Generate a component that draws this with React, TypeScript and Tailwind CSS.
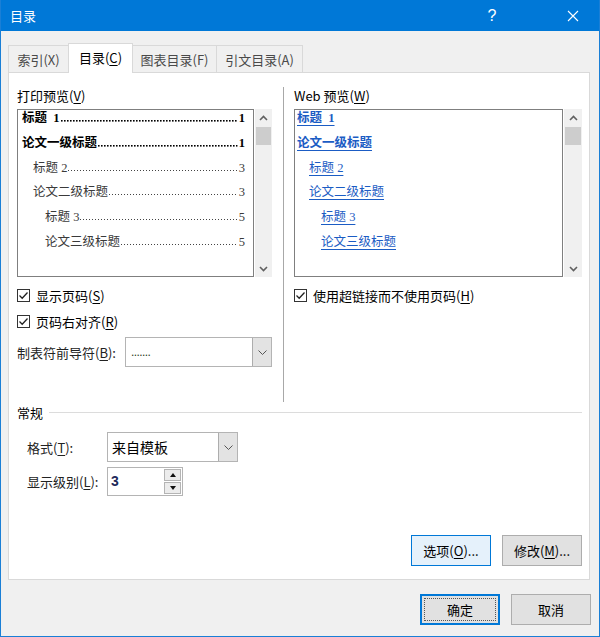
import React from 'react';

const ScrollChevron = ({ up }: { up?: boolean }) => (
  <svg width="9" height="6" viewBox="0 0 9 6">
    <path d={up ? 'M1 5 L4.5 1.5 L8 5' : 'M1 1 L4.5 4.5 L8 1'} fill="none" stroke="#606060" strokeWidth="1.6" />
  </svg>
);

const ComboChevron = () => (
  <svg width="9" height="5" viewBox="0 0 9 5">
    <path d="M0.5 0.5 L4.5 4.5 L8.5 0.5" fill="none" stroke="#555" strokeWidth="1" />
  </svg>
);

const Leader = ({ bold, id }: { bold: boolean; id: string }) => (
  <svg className="flex-1 min-w-0 self-end mb-[4px] mx-[1px]" height="2" preserveAspectRatio="none">
    <defs>
      <pattern id={id} width="3" height="2" patternUnits="userSpaceOnUse">
        <rect x="0" y="0" width={bold ? 1.6 : 1} height={bold ? 1.6 : 1} fill={bold ? '#000' : '#444'} />
      </pattern>
    </defs>
    <rect x="0" y="0" width="100%" height="2" fill={`url(#${id})`} />
  </svg>
);

const Check = ({ label }: { label: React.ReactNode }) => (
  <div className="flex items-center h-[15px]">
    <div className="w-[13px] h-[13px] border border-[#333] bg-white flex items-center justify-center">
      <svg width="11" height="11" viewBox="0 0 11 11">
        <path d="M1.5 5.5 L4.2 8.2 L9.5 2.5" fill="none" stroke="#222" strokeWidth="1.3" />
      </svg>
    </div>
    <span className="ml-[6px] leading-[15px]">{label}</span>
  </div>
);

const Scrollbar = ({ w }: { w: string }) => (
  <div className={`${w} ml-px h-full bg-[#f0f0f0] flex flex-col`}>
    <div className="h-[17px] flex items-center justify-center">
      <ScrollChevron up />
    </div>
    <div className="mt-px h-[18px] mx-px bg-[#cdcdcd]" />
    <div className="flex-1" />
    <div className="h-[17px] flex items-center justify-center">
      <ScrollChevron />
    </div>
  </div>
);

const items = [
  { t: '标题\u00a0\u00a01', n: '1', lvl: 0 },
  { t: '论文一级标题', n: '1', lvl: 0 },
  { t: '标题\u00a02', n: '3', lvl: 1 },
  { t: '论文二级标题', n: '3', lvl: 1 },
  { t: '标题\u00a03', n: '5', lvl: 2 },
  { t: '论文三级标题', n: '5', lvl: 2 },
];

const printPad = ['pl-[4px]', 'pl-[15px]', 'pl-[27px]'];
const webPad = ['pl-[2px]', 'pl-[14px]', 'pl-[26px]'];

const U = ({ c }: { c: string }) => <span className="underline underline-offset-2">{c}</span>;

export default function App() {
  return (
    <div className="w-[600px] h-[637px] bg-[#f0f0f0] border-x border-b border-[#1a7fd6] flex flex-col text-[13px] text-black font-['Noto_Sans_CJK_SC','Noto_Sans',sans-serif]">
      {/* Title bar */}
      <div className="h-[31px] bg-[#0078d7] flex items-center text-white shrink-0">
        <span className="ml-[9px] text-[13px] leading-[31px]">目录</span>
        <div className="flex-1" />
        <div className="w-[30px] flex items-center justify-center text-[16px] font-['Liberation_Sans',sans-serif]">?</div>
        <div className="w-[51px]" />
        <div className="w-[30px] flex items-center justify-center">
          <svg width="12" height="12" viewBox="0 0 12 12">
            <path d="M1 1 L11 11 M11 1 L1 11" stroke="white" strokeWidth="1.1" />
          </svg>
        </div>
        <div className="w-[11px]" />
      </div>

      <div className="pl-[7px] pt-[12px] pr-[8px] flex flex-col">
        {/* Tabs */}
        <div className="flex items-end h-[29px]">
          <div className="w-[61px] h-[27px] border-x border-t border-[#d9d9d9] bg-[#f0f0f0] text-[#4a4a4a] flex items-center justify-center leading-[17px]">索引(X)</div>
          <div className="w-[65px] h-[30px] -ml-px -mb-px relative z-10 border-x border-t border-[#d9d9d9] bg-white text-black flex items-center justify-center leading-[17px] pb-[2px]">
            <span>目录(<U c="C" />)</span>
          </div>
          <div className="w-[85px] h-[27px] -ml-px border-x border-t border-[#d9d9d9] bg-[#f0f0f0] text-[#4a4a4a] flex items-center justify-center leading-[17px]">图表目录(F)</div>
          <div className="w-[87px] h-[27px] -ml-px border-x border-t border-[#d9d9d9] bg-[#f0f0f0] text-[#4a4a4a] flex items-center justify-center leading-[17px]">引文目录(A)</div>
        </div>

        {/* Panel */}
        <div className="w-[582px] h-[508px] bg-white border border-[#d9d9d9] pl-[8px] pr-[7px] pt-[14px] flex flex-col">
          <div className="flex h-[315px]">
            {/* Left column */}
            <div className="w-[255px] flex flex-col">
              <div className="h-[17px] leading-[17px]">打印预览(<U c="V" />)</div>
              <div className="mt-[5px] h-[168px] flex">
                <div className="w-[237px] h-full border border-[#7f7f7f] overflow-hidden">
                  <div className="flex flex-col gap-y-[8.8px] font-['Liberation_Serif','Noto_Sans_CJK_SC',serif] text-[12.5px]">
                    {items.map((it, i) => (
                      <div
                        key={i}
                        className={`h-[16px] leading-[16px] flex pr-[8px] ${printPad[it.lvl]} ${it.lvl === 0 ? 'font-bold text-black' : 'text-[#3a3a3a]'}`}
                      >
                        <span className="whitespace-nowrap">{it.t}</span>
                        <Leader bold={it.lvl === 0} id={`ld${i}`} />
                        <span>{it.n}</span>
                      </div>
                    ))}
                  </div>
                </div>
                <Scrollbar w="w-[17px]" />
              </div>
              <div className="mt-[11px]">
                <Check label={<>显示页码(<U c="S" />)</>} />
              </div>
              <div className="mt-[11px]">
                <Check label={<>页码右对齐(<U c="R" />)</>} />
              </div>
              <div className="mt-[8px] h-[30px] flex items-center">
                <span className="w-[108px] leading-[17px] text-[#222]">制表符前导符(<U c="B" />):</span>
                <div className="w-[147px] h-[30px] border border-[#b4b4b4] bg-white flex">
                  <div className="flex-1 pl-[5px] flex items-center text-[#2d3b1a] text-[12px] font-['Liberation_Sans',sans-serif] leading-none tracking-[-0.6px]">.......</div>
                  <div className="w-[19px] h-full bg-[#e3e3e3] border-l border-[#adadad] flex items-center justify-center">
                    <ComboChevron />
                  </div>
                </div>
              </div>
            </div>

            {/* Divider */}
            <div className="ml-[11px] w-px h-full bg-[#a8a8a8]" />

            {/* Right column */}
            <div className="ml-[10px] w-[288px] flex flex-col">
              <div className="h-[17px] leading-[17px]">Web 预览(<U c="W" />)</div>
              <div className="mt-[5px] h-[168px] flex">
                <div className="w-[269px] h-full border border-[#7f7f7f] overflow-hidden">
                  <div className="flex flex-col gap-y-[8.8px] font-['Liberation_Serif','Noto_Sans_CJK_SC',serif] text-[12.5px] text-[#1b5cc4]">
                    {items.map((it, i) => (
                      <div key={i} className={`h-[16px] leading-[16px] flex ${webPad[it.lvl]} ${it.lvl === 0 ? 'font-bold' : ''}`}>
                        <span className="whitespace-nowrap underline underline-offset-[3px]">{it.t}</span>
                      </div>
                    ))}
                  </div>
                </div>
                <Scrollbar w="w-[18px]" />
              </div>
              <div className="mt-[11px]">
                <Check label={<>使用超链接而不使用页码(<U c="H" />)</>} />
              </div>
            </div>
          </div>

          {/* General section */}
          <div className="mt-[2px] h-[17px] flex items-center">
            <span className="leading-[17px]">常规</span>
            <div className="ml-[6px] flex-1 h-px bg-[#dcdcdc]" />
          </div>

          <div className="mt-[11px] pl-[10px] flex items-center h-[30px]">
            <span className="w-[80px] leading-[17px] text-[#222]">格式(<U c="T" />):</span>
            <div className="w-[131px] h-[30px] border border-[#b4b4b4] bg-white flex">
              <div className="flex-1 pl-[4px] flex items-center leading-[17px] text-[14px]">来自模板</div>
              <div className="w-[19px] h-full bg-[#e3e3e3] border-l border-[#adadad] flex items-center justify-center">
                <ComboChevron />
              </div>
            </div>
          </div>

          <div className="mt-[5px] pl-[10px] flex items-center h-[29px]">
            <span className="w-[80px] leading-[17px] text-[#222]">显示级别(<U c="L" />):</span>
            <div className="w-[76px] h-[29px] border border-[#b4b4b4] bg-white flex">
              <div className="flex-1 pl-[3px] flex items-center text-[14px] font-semibold text-[#1d2a5a] font-['Liberation_Sans',sans-serif]">3</div>
              <div className="w-[18px] flex flex-col py-[1px] pr-[1px] gap-[1px]">
                <div className="flex-1 bg-[#ececec] border border-[#b4b4b4] flex items-center justify-center">
                  <svg width="6" height="4" viewBox="0 0 6 4"><path d="M0 4 L3 0 L6 4 Z" fill="#111" /></svg>
                </div>
                <div className="flex-1 bg-[#ececec] border border-[#b4b4b4] flex items-center justify-center">
                  <svg width="6" height="4" viewBox="0 0 6 4"><path d="M0 0 L3 4 L6 0 Z" fill="#111" /></svg>
                </div>
              </div>
            </div>
          </div>

          <div className="mt-[39px] flex justify-end gap-[11px]">
            <div className="w-[80px] h-[31px] border border-[#0078d7] bg-[#e5f1fb] flex items-center justify-center leading-[17px]">
              选项(<U c="O" />)...
            </div>
            <div className="w-[80px] h-[31px] border border-[#adadad] bg-[#e1e1e1] flex items-center justify-center leading-[17px]">
              修改(<U c="M" />)...
            </div>
          </div>
        </div>

        {/* Bottom buttons */}
        <div className="mt-[14px] flex justify-end gap-[11px]">
          <div className="relative w-[80px] h-[31px] border-2 border-[#0078d7] bg-[#e1e1e1] flex items-center justify-center leading-[17px]">
            <div className="absolute inset-[2px] border border-dotted border-[#555]" />
            确定
          </div>
          <div className="w-[80px] h-[31px] border border-[#adadad] bg-[#e1e1e1] flex items-center justify-center leading-[17px]">
            取消
          </div>
        </div>
      </div>
    </div>
  );
}
